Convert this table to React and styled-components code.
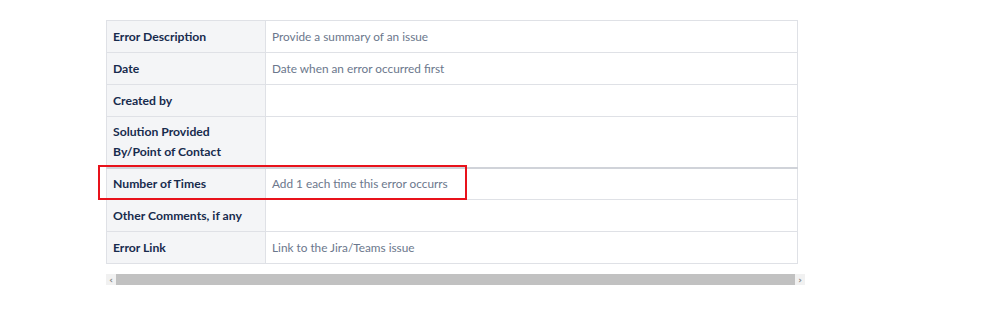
import React from "react";
import styled, { createGlobalStyle } from "styled-components";

const Global = createGlobalStyle`
  body {
    margin: 0;
    background: #ffffff;
    font-family: "Lato", "Noto Sans", sans-serif;
  }
`;

const Page = styled.div`
  padding: 20px 0 0 106px;
`;

const Frame = styled.div`
  position: relative;
  width: 699px;
`;

const Table = styled.table`
  border-collapse: collapse;
  width: 692px;
  table-layout: fixed;
`;

const Row = styled.tr`
  border-top: ${(p) => (p.$heavy ? "2px solid #d0d3d9" : "1px solid #dfe1e6")};
`;

const Head = styled.th`
  width: 159px;
  box-sizing: border-box;
  text-align: left;
  font-size: 12.2px;
  font-weight: 700;
  color: #172b4d;
  background: #f4f5f7;
  border: 1px solid #dfe1e6;
  padding: 0 6px;
  line-height: 20px;
  height: ${(p) => (p.$tall ? "51px" : "32px")};
`;

const Cell = styled.td`
  font-size: 11.8px;
  color: #6b778c;
  border: 1px solid #dfe1e6;
  padding: 0 6px;
  line-height: 20px;
`;

const Highlight = styled.div`
  position: absolute;
  left: -8px;
  top: 145px;
  width: 369px;
  height: 35px;
  box-sizing: border-box;
  border: 2px solid #e8121b;
  pointer-events: none;
`;

const Scrollbar = styled.div`
  display: flex;
  margin-top: 10px;
  height: 11px;
  background: #f1f1f1;
`;

const Arrow = styled.div`
  width: 10px;
  display: flex;
  align-items: center;
  justify-content: center;
  color: #8a8a8a;
  font-size: 9px;
  font-weight: 700;
  font-family: "DejaVu Sans", sans-serif;
`;

const Thumb = styled.div`
  flex: 1;
  background: #c1c1c1;
`;

const rows = [
  { label: "Error Description", value: "Provide a summary of an issue" },
  { label: "Date", value: "Date when an error occurred first" },
  { label: "Created by", value: "" },
  { label: ["Solution Provided", "By/Point of Contact"], value: "", tall: true },
  { label: "Number of Times", value: "Add 1 each time this error occurrs", heavy: true },
  { label: "Other Comments, if any", value: "" },
  { label: "Error Link", value: "Link to the Jira/Teams issue" },
];

export default function App() {
  return (
    <Page>
      <Global />
      <Frame>
        <Table>
          <tbody>
            {rows.map((r, i) => (
              <Row key={i} $heavy={r.heavy}>
                <Head $tall={r.tall}>
                  {Array.isArray(r.label) ? (
                    <>
                      {r.label[0]}
                      <br />
                      {r.label[1]}
                    </>
                  ) : (
                    r.label
                  )}
                </Head>
                <Cell>{r.value}</Cell>
              </Row>
            ))}
          </tbody>
        </Table>
        <Highlight />
        <Scrollbar>
          <Arrow>‹</Arrow>
          <Thumb />
          <Arrow>›</Arrow>
        </Scrollbar>
      </Frame>
    </Page>
  );
}
